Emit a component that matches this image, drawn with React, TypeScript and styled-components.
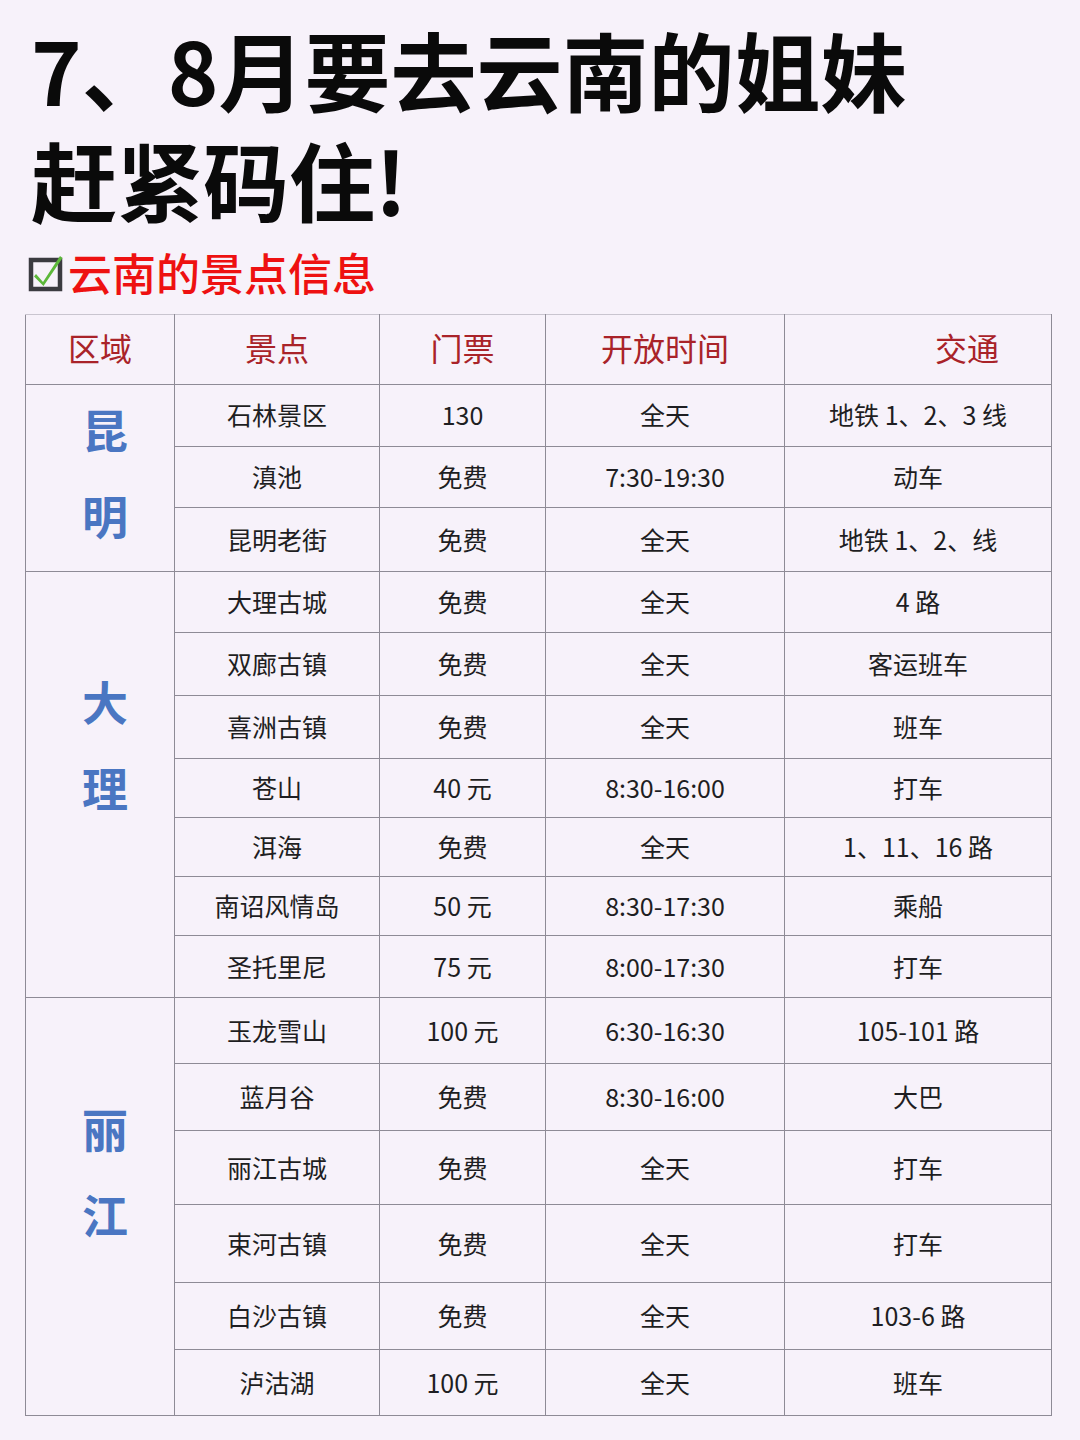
import styled, { createGlobalStyle } from "styled-components";

const GlobalStyle = createGlobalStyle`
  html, body {
    margin: 0;
    padding: 0;
    background: #f7f2fa;
  }
  body {
    font-family: "Noto Sans CJK SC", "Noto Sans", sans-serif;
  }
`;

type Spot = { name: string; price: string; hours: string; transport: string; h: number };
type Region = { label: [string, string]; lift: number; spots: Spot[] };

const regions: Region[] = [
  {
    label: ["昆", "明"],
    lift: 14,
    spots: [
      { name: "石林景区", price: "130", hours: "全天", transport: "地铁 1、2、3 线", h: 61 },
      { name: "滇池", price: "免费", hours: "7:30-19:30", transport: "动车", h: 61 },
      { name: "昆明老街", price: "免费", hours: "全天", transport: "地铁 1、2、线", h: 63 },
    ],
  },
  {
    label: ["大", "理"],
    lift: 84,
    spots: [
      { name: "大理古城", price: "免费", hours: "全天", transport: "4 路", h: 61 },
      { name: "双廊古镇", price: "免费", hours: "全天", transport: "客运班车", h: 63 },
      { name: "喜洲古镇", price: "免费", hours: "全天", transport: "班车", h: 63 },
      { name: "苍山", price: "40 元", hours: "8:30-16:00", transport: "打车", h: 59 },
      { name: "洱海", price: "免费", hours: "全天", transport: "1、11、16 路", h: 59 },
      { name: "南诏风情岛", price: "50 元", hours: "8:30-17:30", transport: "乘船", h: 59 },
      { name: "圣托里尼", price: "75 元", hours: "8:00-17:30", transport: "打车", h: 62 },
    ],
  },
  {
    label: ["丽", "江"],
    lift: 74,
    spots: [
      { name: "玉龙雪山", price: "100 元", hours: "6:30-16:30", transport: "105-101 路", h: 66 },
      { name: "蓝月谷", price: "免费", hours: "8:30-16:00", transport: "大巴", h: 67 },
      { name: "丽江古城", price: "免费", hours: "全天", transport: "打车", h: 74 },
      { name: "束河古镇", price: "免费", hours: "全天", transport: "打车", h: 78 },
      { name: "白沙古镇", price: "免费", hours: "全天", transport: "103-6 路", h: 67 },
      { name: "泸沽湖", price: "100 元", hours: "全天", transport: "班车", h: 66 },
    ],
  },
];

const CheckIcon = () => (
  <svg width="40" height="42" viewBox="0 0 40 42">
    <rect x="5" y="9" width="29" height="29" fill="none" stroke="#3b3b40" strokeWidth="4.5" />
    <path d="M10 23 L17 31 L34 5 L36.5 7 L17.5 35 L8 25.5 Z" fill="#5cb83a" />
  </svg>
);

export default function App() {
  return (
    <>
      <GlobalStyle />
      <Page>
        <Title>
          7、8月要去云南的姐妹
          <br />
          赶紧码住!
        </Title>
        <Subtitle>
          <CheckIcon />
          <span>云南的景点信息</span>
        </Subtitle>
        <Table>
          <colgroup>
            <col style={{ width: 149 }} />
            <col style={{ width: 205 }} />
            <col style={{ width: 166 }} />
            <col style={{ width: 239 }} />
            <col style={{ width: 267 }} />
          </colgroup>
          <thead>
            <Row $h={70}>
              <HeadCell>区域</HeadCell>
              <HeadCell>景点</HeadCell>
              <HeadCell>门票</HeadCell>
              <HeadCell>开放时间</HeadCell>
              <HeadCell $shift={98}>交通</HeadCell>
            </Row>
          </thead>
          <tbody>
            {regions.map((r) =>
              r.spots.map((s, i) => (
                <Row key={s.name} $h={s.h}>
                  {i === 0 && (
                    <RegionCell rowSpan={r.spots.length} $lift={r.lift}>
                      <RegionChar>{r.label[0]}</RegionChar>
                      <RegionChar>{r.label[1]}</RegionChar>
                    </RegionCell>
                  )}
                  <Cell>{s.name}</Cell>
                  <Cell>{s.price}</Cell>
                  <Cell>{s.hours}</Cell>
                  <Cell>{s.transport}</Cell>
                </Row>
              ))
            )}
          </tbody>
        </Table>
      </Page>
    </>
  );
}

const Page = styled.div`
  width: 1080px;
  height: 1440px;
  box-sizing: border-box;
  padding: 14px 0 0 25px;
  overflow: hidden;
`;

const Title = styled.h1`
  margin: 0 0 0 6px;
  font-size: 86px;
  line-height: 110px;
  font-weight: 700;
  color: #0a0a0a;
`;

const Subtitle = styled.div`
  display: flex;
  align-items: center;
  height: 60px;
  margin-top: 8px;
  margin-left: 1px;
  font-size: 44px;
  font-weight: 500;
  color: #ee1111;
  svg {
    flex: none;
    margin-right: 2px;
  }
`;

const Table = styled.table`
  margin-top: 12px;
  width: 1026px;
  table-layout: fixed;
  border-collapse: collapse;
  border: 1px solid #8e8b96;
`;

const Row = styled.tr<{ $h: number }>`
  height: ${(p) => p.$h}px;
`;

const HeadCell = styled.th<{ $shift?: number }>`
  border: 1px solid #8e8b96;
  border-top-color: #c9c5cf;
  padding: 0 0 6px ${(p) => p.$shift ?? 0}px;
  font-size: 32px;
  font-weight: 400;
  color: #a92329;
  text-align: center;
  vertical-align: middle;
`;

const Cell = styled.td`
  border: 1px solid #8e8b96;
  padding: 0 0 2px;
  font-size: 25px;
  color: #1e1e22;
  text-align: center;
  vertical-align: middle;
  white-space: nowrap;
`;

const RegionCell = styled.td<{ $lift: number }>`
  border: 1px solid #8e8b96;
  padding: 0 0 ${(p) => p.$lift}px 10px;
  vertical-align: middle;
  text-align: center;
`;

const RegionChar = styled.div`
  font-size: 46px;
  line-height: 86px;
  font-weight: 700;
  color: #4a76c2;
`;
